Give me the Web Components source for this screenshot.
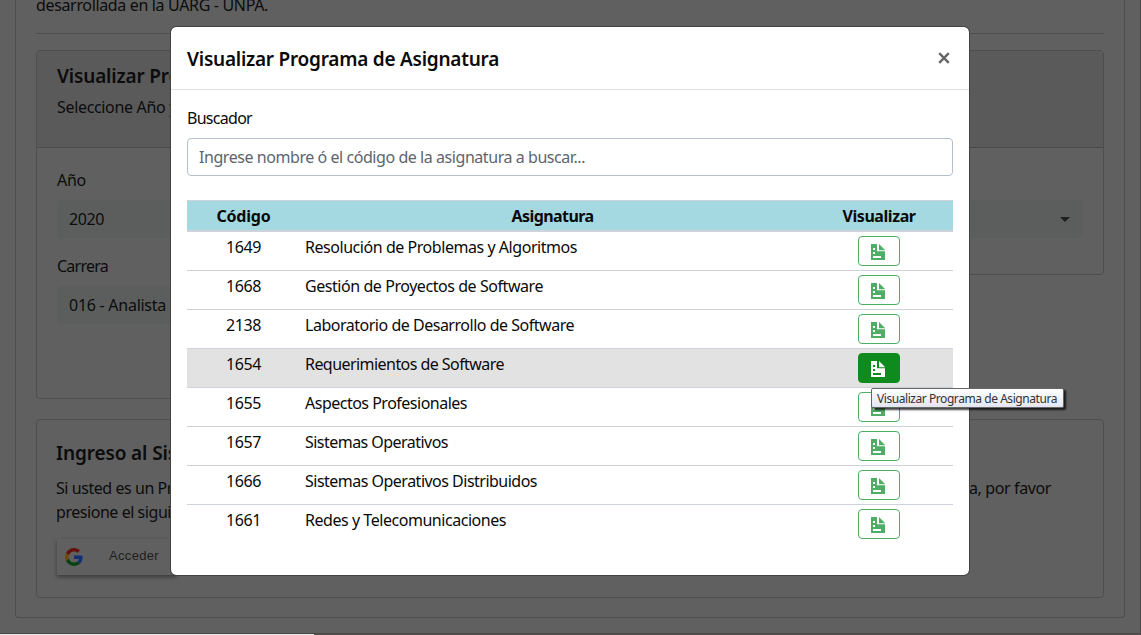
<!DOCTYPE html>
<html lang="es">
<head>
<meta charset="utf-8">
<title>Visualizar Programa de Asignatura</title>
<style>
html,body{margin:0;height:635px;overflow:hidden;background:#606060}
body{font:16px/24px "Noto Sans","Open Sans",sans-serif;color:#0c0c0c}
</style>
</head>
<body>
<portal-page></portal-page>
<script>
const define = (name, html, setup) => customElements.define(name, class extends HTMLElement {
  connectedCallback() {
    if (this.shadowRoot) return;
    const t = document.createElement('template');
    t.innerHTML = html;
    this.attachShadow({mode: 'open'}).append(t.content.cloneNode(true));
    if (setup) setup(this, this.shadowRoot);
  }
});

/* One line of text whose tracking is adjusted to a given advance width. */
define('fit-text', `<style>:host{display:inline-block;white-space:nowrap}span{display:inline-block}</style><span><slot></slot></span>`, (el, root) => {
  const w = +el.getAttribute('w');
  if (!w) return;
  const s = root.querySelector('span'), n = el.textContent.length;
  s.style.letterSpacing = (w - s.getBoundingClientRect().width) / n + 'px';
});

define('program-icon', `<style>:host{display:block;width:14px;height:16px}svg{display:block}</style>
<svg width="14" height="16" viewBox="0 0 14 16" fill="currentColor"><path fill-rule="evenodd" d="M0 0H6V7.3H14V16H0ZM2 4V6H4V4ZM2 8V10H4V8ZM2 12V14H10V12Z"/><path d="M8 0L14.2 6.2H8Z"/></svg>`);

define('view-button', `<style>
:host{display:block;width:42px;height:30px}
button{box-sizing:border-box;width:42px;height:30px;display:flex;padding:7px 0 0 12px;border:1px solid #4fae66;border-radius:4px;background:#fff;color:#4fae66}
:host([active]) button{background:#0f8a1c;border-color:#0f8a1c;color:#fff}
</style><button aria-label="Visualizar"><program-icon></program-icon></button>`);

define('subject-row', `<style>
:host{display:grid;grid-template-columns:113px 505px 148px;height:38px;border-bottom:1px solid #ced2da;color:#0a0a0a}
:host([last]){border-color:transparent}
:host([active]){background:#e2e2e2}
div{padding-top:3px}.c{text-align:center}.n{padding-left:5px}.b{display:flex;justify-content:center;padding-top:4px}
</style><div class="c"></div><div class="n"></div><div class="b"></div>`, (el, r) => {
  r.querySelector('.c').innerHTML = '<fit-text w="35">' + el.getAttribute('code') + '</fit-text>';
  r.querySelector('.n').innerHTML = '<fit-text w="' + el.getAttribute('w') + '">' + el.getAttribute('name') + '</fit-text>';
  r.querySelector('.b').innerHTML = el.hasAttribute('active') ? '<view-button active></view-button>' : '<view-button></view-button>';
});

define('subject-table', `<style>
:host{display:block;margin-top:24px}
.h{display:grid;grid-template-columns:113px 505px 148px;text-align:center;font-weight:700;height:29px;line-height:24px;border-top:1px solid #ced2da;border-bottom:2px solid #ced2da;background:#a4d9e1;color:#0a0a0a}
.h div{padding-top:3px}
</style>
<div class="h"><div><fit-text w="54">Código</fit-text></div><div><fit-text w="82">Asignatura</fit-text></div><div><fit-text w="73">Visualizar</fit-text></div></div>
<subject-row code="1649" name="Resolución de Problemas y Algoritmos" w="272"></subject-row>
<subject-row code="1668" name="Gestión de Proyectos de Software" w="238"></subject-row>
<subject-row code="2138" name="Laboratorio de Desarrollo de Software" w="269"></subject-row>
<subject-row code="1654" name="Requerimientos de Software" w="199" active></subject-row>
<subject-row code="1655" name="Aspectos Profesionales" w="162"></subject-row>
<subject-row code="1657" name="Sistemas Operativos" w="143"></subject-row>
<subject-row code="1666" name="Sistemas Operativos Distribuidos" w="232"></subject-row>
<subject-row code="1661" name="Redes y Telecomunicaciones" w="201" last></subject-row>`);

define('program-dialog', `<style>
:host{display:block;box-sizing:border-box;width:800px;height:550px;border:1px solid #434343;border-radius:6px;background:#fff;background-clip:padding-box;color:#0a0a0a}
header{box-sizing:border-box;height:63px;border-bottom:1px solid #dee2e6;padding:17px 19px 0 16px;display:flex;justify-content:space-between}
h5{margin:0;font-size:19px;line-height:30px;font-weight:600}
header svg{margin-top:8px}
main{padding:16px 16px 0}
label{display:block;height:24px}
.i{box-sizing:border-box;height:38px;margin-top:8px;border:1px solid #b5bfcb;border-radius:4px;padding:6px 11px;color:#5c656e}
</style>
<header><h5><fit-text w="312">Visualizar Programa de Asignatura</fit-text></h5>
<svg width="12" height="12" viewBox="0 0 12 12" stroke="#666" stroke-width="2.4"><path d="M1.2 1.2L10.8 10.8M10.8 1.2L1.2 10.8"/></svg></header>
<main><label><fit-text w="65">Buscador</fit-text></label>
<div class="i"><fit-text w="386">Ingrese nombre ó el código de la asignatura a buscar...</fit-text></div>
<subject-table></subject-table></main>`);

define('hover-tip', `<style>
:host{display:block;box-sizing:border-box;width:193px;height:20px;border:1px solid #666;border-radius:2px;background:linear-gradient(#fff,#e4e5f0);box-shadow:2px 2px 2px rgba(0,0,0,.75);font-size:12px;line-height:19px;padding-left:5px;color:#333}
</style><fit-text w="180">Visualizar Programa de Asignatura</fit-text>`);

define('select-box', `<style>
:host{box-sizing:border-box;display:flex;align-items:center;justify-content:space-between;height:38px;padding:0 13px 0 12px;border-radius:4px;background:#5b5e5d}
i{border:5px solid transparent;border-top-color:#202020;border-bottom:0}
</style><slot></slot><i></i>`);

define('portal-card', `<style>
:host{display:block;box-sizing:border-box;border:1px solid #4e4e4e;border-radius:4px}
header{box-sizing:border-box;height:97px;border-bottom:1px solid #4a4a4a;background:#5a5a5a;padding:11px 20px;border-radius:3px 3px 0 0}
section{padding:20px}
</style><header><slot name="head"></slot></header><section><slot></slot></section>`);

define('google-button', `<style>
:host{box-sizing:border-box;display:flex;align-items:center;width:120px;height:36px;border-radius:1px;background:#606060;box-shadow:0 2px 4px rgba(0,0,0,.4);padding-left:8px;font:13px "Liberation Sans",sans-serif;color:#1e1e1e}
fit-text{margin-left:26px;margin-top:-3px}
</style><svg width="18" height="18" viewBox="0 0 48 48"><path fill="#66120c" d="M24 9.5c3.54 0 6.71 1.22 9.21 3.6l6.85-6.85C35.9 2.38 30.47 0 24 0 14.62 0 6.51 5.38 2.56 13.22l7.98 6.19C12.43 13.72 17.74 9.5 24 9.5z"/><path fill="#142f72" d="M46.98 24.55c0-1.57-.15-3.09-.38-4.55H24v9.02h12.94c-.58 2.96-2.26 5.48-4.78 7.18l7.73 6c4.51-4.18 7.09-10.36 7.09-17.65z"/><path fill="#6b4b00" d="M10.53 28.59A14.5 14.5 0 0 1 9.77 24c0-1.6.27-3.14.76-4.59l-7.98-6.19A23.9 23.9 0 0 0 0 24c0 3.88.92 7.54 2.56 10.78z"/><path fill="#0b4315" d="M24 48c6.48 0 11.93-2.13 15.89-5.81l-7.73-6c-2.15 1.45-4.92 2.3-8.16 2.3-6.26 0-11.57-4.22-13.47-9.91l-7.98 6.19C6.51 42.62 14.62 48 24 48z"/></svg><fit-text w="50">Acceder</fit-text>`);

define('portal-page', `<style>
:host{display:block;position:relative;box-sizing:border-box;height:635px;border-right:1px solid #4a4a4a;overflow:hidden}
.o{box-sizing:border-box;width:1110px;height:618px;margin-left:15px;border:1px solid #4e4e4e;border-top:0;border-radius:0 0 4px 4px;padding:0 20px}
.t{height:33px;line-height:10px;border-bottom:1px solid #4e4e4e}
.g{display:grid;grid-template-columns:526px 526px;gap:16px;align-items:start;margin-top:16px}
.l{height:349px}.r{height:225px}
h5{margin:0;font-size:19px;line-height:28px;font-weight:600}
p{margin:5px 0 0}
label{display:block;height:24px;margin-bottom:8px}
select-box+label{margin-top:16px}
.gap{height:32px}
.login{box-sizing:border-box;height:179px;margin-top:20px;border:1px solid #4e4e4e;border-radius:4px;padding:19px}
.login p.line{display:flex;justify-content:space-between;padding-right:33px;margin-top:9px}
.login p{margin:0}
google-button{margin:15px 0 0 1px}
.m{position:absolute;left:170px;top:26px}.tip{position:absolute;left:871px;top:388px}
.rule{border-top:1px solid #484848;margin-top:15px;height:1px;background:linear-gradient(90deg,#e6e6e6 314px,#5b5454 314px)}
</style>
<div class="o"><div class="t"><fit-text w="232">desarrollada en la UARG - UNPA.</fit-text></div>
<div class="g">
<portal-card class="l"><div slot="head"><h5><fit-text w="123">Visualizar Pro</fit-text></h5><p><fit-text w="120">Seleccione Año y</fit-text></p></div>
<label><fit-text w="29">Año</fit-text></label><select-box><fit-text w="35">2020</fit-text></select-box>
<label><fit-text w="51">Carrera</fit-text></label><select-box><fit-text w="97">016 - Analista</fit-text></select-box></portal-card>
<portal-card class="r"><div class="gap"></div><select-box><span></span></select-box></portal-card>
</div>
<div class="login"><h5><fit-text w="121">Ingreso al Sis</fit-text></h5>
<p class="line"><fit-text w="117">Si usted es un Pr</fit-text><fit-text w="82">a, por favor</fit-text></p>
<p><fit-text w="115">presione el sigui</fit-text></p>
<google-button></google-button></div></div>
<div class="rule"></div>
<program-dialog class="m"></program-dialog><hover-tip class="tip"></hover-tip>`);
</script>
</body>
</html>
